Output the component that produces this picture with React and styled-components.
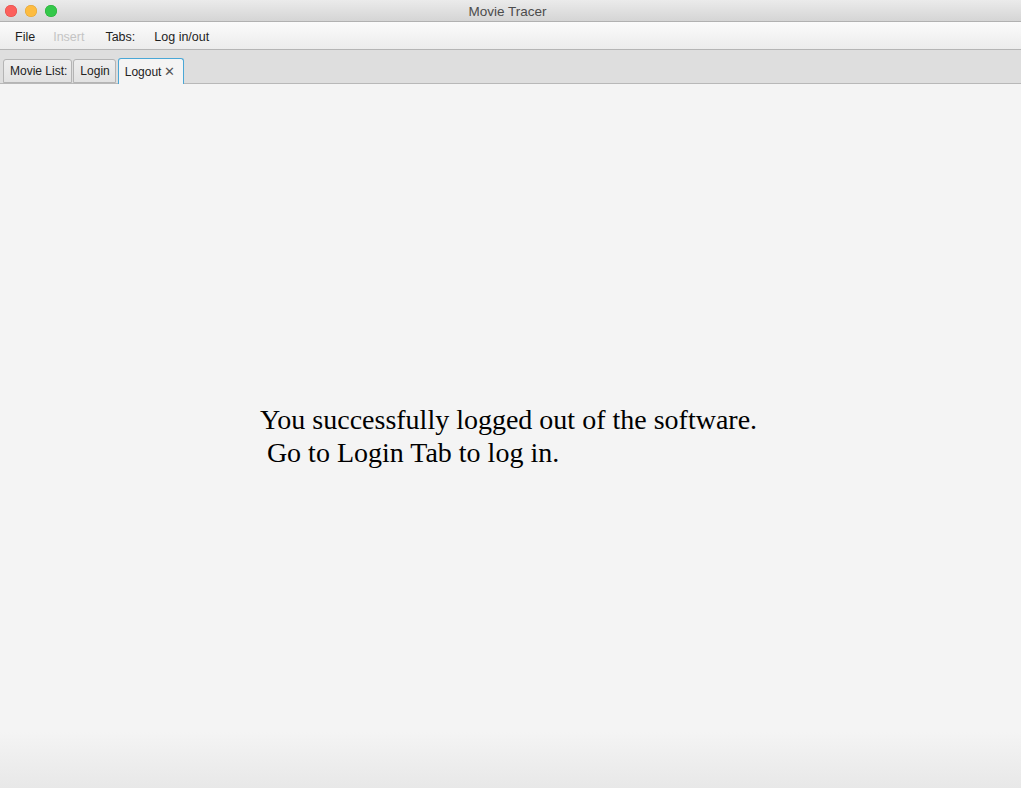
import React from "react";
import styled, { createGlobalStyle } from "styled-components";

const Global = createGlobalStyle`
  html, body { margin: 0; padding: 0; background: #f4f4f4; }
  #root { height: 788px; }
`;

const Window = styled.div`
  width: 1021px;
  height: 788px;
  display: flex;
  flex-direction: column;
  overflow: hidden;
  font-family: "Liberation Sans", Arial, sans-serif;
`;

const TitleBar = styled.div`
  height: 21px;
  flex: none;
  position: relative;
  display: flex;
  align-items: center;
  justify-content: center;
  background: linear-gradient(#ebebeb, #d5d5d5);
  border-bottom: 1px solid #b1b1b1;
  font-size: 13.5px;
  color: #4c4c4c;
  padding-right: 6px;
  padding-top: 1px;
  box-sizing: border-box;
  height: 22px;
`;

const Lights = styled.div`
  position: absolute;
  left: 5px;
  top: 5px;
  display: flex;
  gap: 8px;
`;

const Light = styled.span`
  width: 12px;
  height: 12px;
  border-radius: 50%;
  background: ${(p) => p.$c};
  box-shadow: inset 0 0 0 0.5px ${(p) => p.$b};
`;

const MenuBar = styled.div`
  height: 28px;
  flex: none;
  display: flex;
  align-items: center;
  padding: 2px 0 0 15px;
  box-sizing: border-box;
  background: linear-gradient(#fbfbfb, #ececec);
  border-bottom: 1px solid #b5b5b5;
  font-size: 12.5px;
`;

const MenuItem = styled.span`
  color: ${(p) => (p.$disabled ? "#c4c4c4" : "#1e1e1e")};
  margin-right: ${(p) => p.$gap}px;
`;

const TabStrip = styled.div`
  height: 34px;
  flex: none;
  display: flex;
  align-items: flex-end;
  padding-left: 3px;
  gap: 1px;
  background: #dedede;
  border-bottom: 1px solid #b8b8b8;
  box-sizing: border-box;
`;

const Tab = styled.div`
  height: ${(p) => (p.$active ? 26 : 24)}px;
  box-sizing: border-box;
  display: flex;
  align-items: center;
  gap: 3px;
  padding: 0 ${(p) => p.$pr}px 0 6px;
  margin-bottom: ${(p) => (p.$active ? -1 : 0)}px;
  margin-left: ${(p) => (p.$active ? 1 : 0)}px;
  font-size: 12px;
  color: #222;
  border: 1px solid ${(p) => (p.$active ? "#4aa7d6" : "#b4b4b4")};
  border-bottom: ${(p) => (p.$active ? "none" : "1px solid #b4b4b4")};
  border-radius: 3px 3px 0 0;
  background: ${(p) => (p.$active ? "#f4f4f4" : "linear-gradient(#eeeeee, #e2e2e2)")};
`;

const Close = styled.span`
  font-size: 13px;
  color: #555;
  line-height: 1;
`;

const Content = styled.div`
  flex: 1;
  display: flex;
  align-items: center;
  justify-content: center;
  background: linear-gradient(#f4f4f4 0, #f4f4f4 92%, #e8e8e8 100%);
`;

const Message = styled.div`
  font-family: "Liberation Serif", "Times New Roman", serif;
  font-size: 28px;
  line-height: 33px;
  color: #000;
  white-space: pre;
  margin-left: -4px;
  margin-top: 0px;
`;

export default function App() {
  return (
    <>
      <Global />
      <Window>
        <TitleBar>
          <Lights>
            <Light $c="#fc605c" $b="#de4a45" />
            <Light $c="#fdbc40" $b="#dea236" />
            <Light $c="#34c84a" $b="#27aa35" />
          </Lights>
          Movie Tracer
        </TitleBar>
        <MenuBar>
          <MenuItem $gap={18}>File</MenuItem>
          <MenuItem $disabled $gap={21}>Insert</MenuItem>
          <MenuItem $gap={19}>Tabs:</MenuItem>
          <MenuItem $gap={0}>Log in/out</MenuItem>
        </MenuBar>
        <TabStrip>
          <Tab $pr={4}>Movie List:</Tab>
          <Tab $pr={5}>Login</Tab>
          <Tab $active $pr={8}>
            Logout <Close>✕</Close>
          </Tab>
        </TabStrip>
        <Content>
          <Message>
            {"You successfully logged out of the software.\n Go to Login Tab to log in."}
          </Message>
        </Content>
      </Window>
    </>
  );
}
